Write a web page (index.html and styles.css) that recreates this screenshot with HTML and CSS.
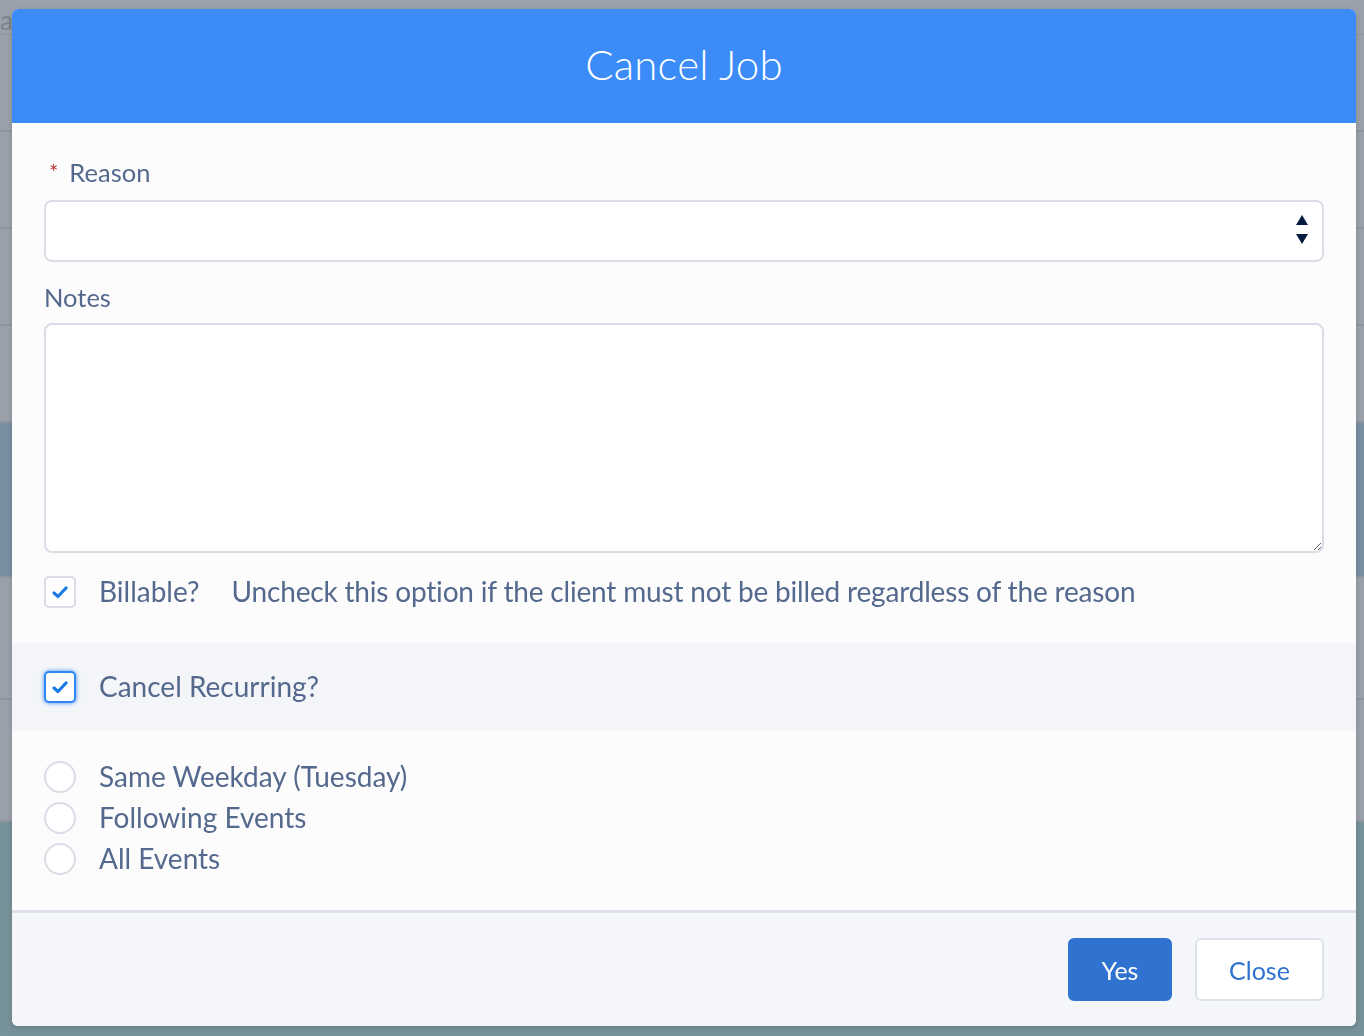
FILE: index.html
```html
<!DOCTYPE html>
<html lang="en">
<head>
  <meta charset="UTF-8" />
  <title>Cancel Job</title>
  <link rel="stylesheet" href="styles.css">
</head>
<body>
  <!-- dimmed page behind the modal -->
  <div class="backdrop">
    <div class="bg-head">
      <span>a</span><span>Resource</span><span>Status</span><span>Type/Service</span><span>Address</span><span>With</span>
    </div>
    <div class="bg-row"></div>
    <div class="bg-row"></div>
    <div class="bg-row"></div>
    <div class="bg-row"></div>
    <div class="bg-row selected"></div>
    <div class="bg-row"></div>
    <div class="bg-row"></div>
    <div class="bg-foot"></div>
  </div>

  <div class="overlay">
    <div class="modal">
      <header class="modal-header">
        <h1>Cancel Job</h1>
      </header>

      <div class="modal-body">
        <div class="fields">
          <label class="label" for="reason"><abbr class="req">*</abbr>Reason</label>
          <div class="select-wrap">
            <select id="reason" class="select"><option></option></select>
            <svg class="select-arrows" width="14" height="34" viewBox="0 0 14 34">
              <path d="M7 3 L13 13 L1 13 Z" fill="#061c3f"/>
              <path d="M1 22 L13 22 L7 32 Z" fill="#061c3f"/>
            </svg>
          </div>

          <label class="label notes-label" for="notes">Notes</label>
          <textarea id="notes" class="textarea"></textarea>

          <div class="check-row billable">
            <span class="checkbox">
              <svg width="16" height="14" viewBox="0 0 16 14"><path d="M2 8 L6 11.5 L14 3" fill="none" stroke="#1b7ce9" stroke-width="3.2" stroke-linecap="round" stroke-linejoin="round"/></svg>
            </span>
            <span class="check-text">Billable?</span>
            <span class="check-help">Uncheck this option if the client must not be billed regardless of the reason</span>
          </div>
        </div>

        <div class="recurring">
          <div class="check-row">
            <span class="checkbox focused">
              <svg width="16" height="14" viewBox="0 0 16 14"><path d="M2 8 L6 11.5 L14 3" fill="none" stroke="#1b7ce9" stroke-width="3.2" stroke-linecap="round" stroke-linejoin="round"/></svg>
            </span>
            <span class="check-text">Cancel Recurring?</span>
          </div>
        </div>

        <div class="radios">
          <div class="radio-row"><span class="radio"></span><span class="check-text">Same Weekday (Tuesday)</span></div>
          <div class="radio-row"><span class="radio"></span><span class="check-text">Following Events</span></div>
          <div class="radio-row"><span class="radio"></span><span class="check-text">All Events</span></div>
        </div>
      </div>

      <footer class="modal-footer">
        <button class="btn btn-brand" type="button">Yes</button>
        <button class="btn btn-neutral" type="button">Close</button>
      </footer>
    </div>
  </div>
</body>
</html>
```

FILE: styles.css
```css
/* Page + backdrop */
body {
  margin: 0;
  font-family: Lato, "Open Sans", sans-serif;
  background: #9aa1ab;
  height: 1036px;
  overflow: hidden;
}
.backdrop {
  display: flex;
  flex-direction: column;
  height: 1036px;
}
.bg-head {
  height: 34px;
  display: flex;
  gap: 170px;
  color: #7d838c;
  font-size: 26px;
  line-height: 40px;
  border-bottom: 1px solid #8f96a0;
  flex: none;
}
.bg-row {
  height: 95px;
  flex: none;
  border-bottom: 2px solid #8f96a0;
}
.bg-row.selected { background: #7b8fa3; height: 153px; }
.bg-row:nth-child(7), .bg-row:nth-child(8) { height: 120px; }
.bg-foot {
  flex: 1;
  background: #78929a;
}

/* Modal */
.overlay {
  position: fixed;
  inset: 0;
  display: flex;
  padding: 9px 0 0 12px;
}
.modal {
  width: 1344px;
  height: 1017px;
  display: flex;
  flex-direction: column;
  border-radius: 6px;
  overflow: hidden;
  background: #fcfcfd;
  box-shadow: 0 2px 6px rgba(0, 0, 0, 0.15);
}
.modal-header {
  height: 114px;
  flex: none;
  box-sizing: border-box;
  padding-bottom: 4px;
  background: #3b8cf8;
  display: flex;
  align-items: center;
  justify-content: center;
}
.modal-header h1 {
  margin: 0;
  color: #fff;
  font-weight: 300;
  font-size: 42px;
  letter-spacing: 0.2px;
}

.modal-body { flex: 1; }
.fields { padding: 35px 32px 35px; }

.label {
  display: block;
  font-size: 25.5px;
  line-height: 28px;
  color: #54698d;
}
.req {
  color: #c23934;
  text-decoration: none;
  font-size: 22px;
  margin: 0 11px 0 5px;
  vertical-align: 2px;
}
.select-wrap {
  position: relative;
  margin-top: 14px;
}
.select {
  display: block;
  width: 100%;
  height: 62px;
  border: 2px solid #d8dde6;
  border-radius: 8px;
  background: #fff;
  appearance: none;
  font-size: 24px;
}
.select-arrows {
  position: absolute;
  right: 15px;
  top: 12px;
}
.notes-label { margin-top: 21px; }
.textarea {
  display: block;
  box-sizing: border-box;
  width: 100%;
  height: 230px;
  margin-top: 12px;
  border: 2px solid #d8dde6;
  border-radius: 8px;
  background: #fff;
  resize: vertical;
  font-size: 24px;
}

.check-row {
  display: flex;
  align-items: center;
  height: 32px;
}
.billable { margin-top: 23px; }
.checkbox {
  width: 32px;
  height: 32px;
  box-sizing: border-box;
  border: 2px solid #d8dde6;
  border-radius: 5px;
  background: #fff;
  display: flex;
  align-items: center;
  justify-content: center;
  flex: none;
}
.checkbox.focused {
  border-color: #2f87f5;
  box-shadow: 0 0 4px #3f8ef5;
}
.check-text {
  margin-left: 23px;
  font-size: 28px;
  line-height: 32px;
  margin-top: -2px;
  color: #54698d;
}
.check-help {
  margin-left: 32px;
  font-size: 28px;
  letter-spacing: -0.18px;
  line-height: 32px;
  margin-top: -2px;
  color: #54698d;
}

.recurring {
  background: #f3f5f9;
  height: 88px;
  padding: 0 32px;
  display: flex;
  align-items: center;
}

.radios {
  padding: 30px 32px 0;
  display: flex;
  flex-direction: column;
  gap: 9px;
}
.radio-row {
  display: flex;
  align-items: center;
  height: 32px;
}
.radio {
  width: 32px;
  height: 32px;
  box-sizing: border-box;
  border: 2px solid #d8dde6;
  border-radius: 50%;
  background: #fff;
  flex: none;
}

/* Footer */
.modal-footer {
  height: 113px;
  flex: none;
  border-top: 3px solid #dde1ea;
  background: #f4f6fa;
  display: flex;
  align-items: center;
  justify-content: flex-end;
  gap: 23px;
  padding-right: 32px;
}
.btn {
  height: 63px;
  border-radius: 6px;
  font-family: Lato, "Open Sans", sans-serif;
  font-size: 25px;
  cursor: pointer;
}
.btn-brand {
  width: 104px;
  background: #2f72cf;
  border: 2px solid #2f72cf;
  color: #fff;
}
.btn-neutral {
  width: 129px;
  background: #fff;
  border: 2px solid #dde1ea;
  color: #2f72cf;
}
```
